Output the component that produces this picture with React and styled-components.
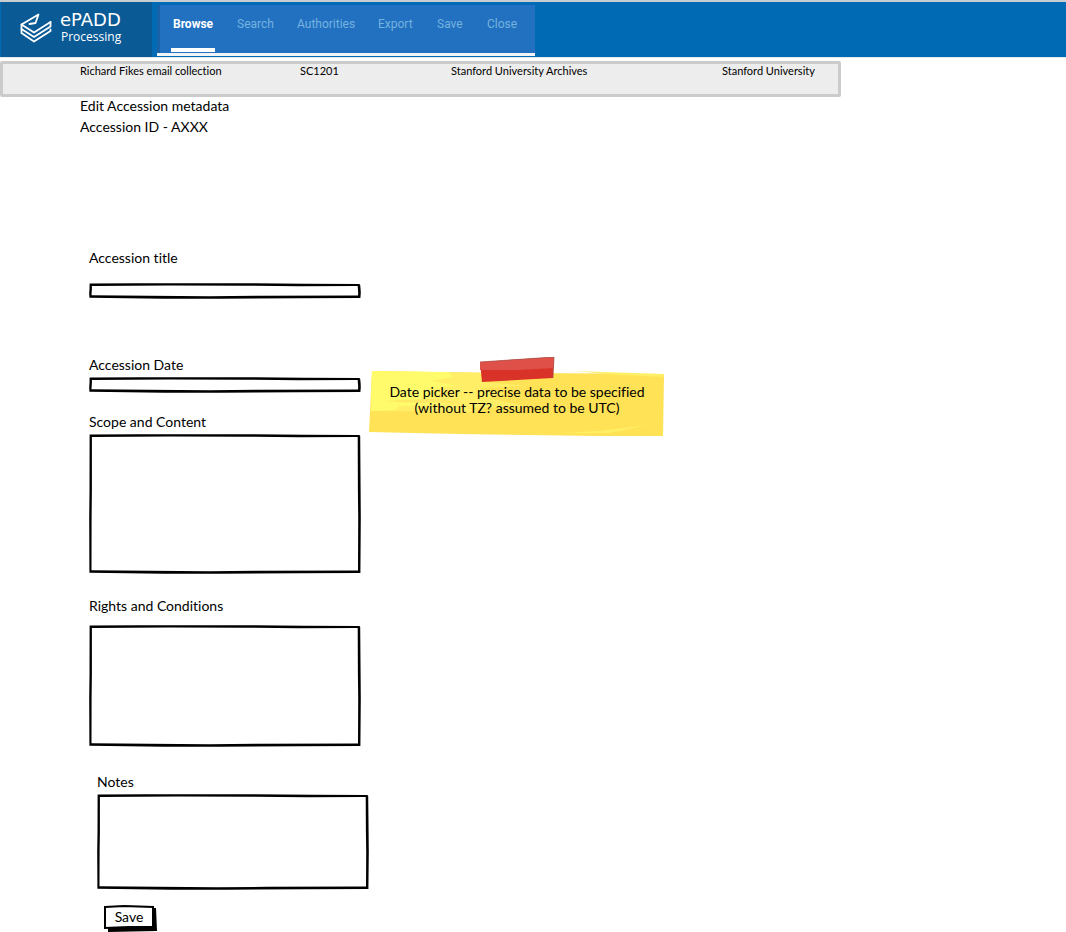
import React from "react";
import styled, { createGlobalStyle, css } from "styled-components";

const GlobalStyle = createGlobalStyle`
  *, *::before, *::after { box-sizing: border-box; }
  body {
    margin: 0;
    background: #ffffff;
    color: #000000;
    font-family: Lato, "Liberation Sans", sans-serif;
    font-size: 14px;
    line-height: 20px;
    font-variant-ligatures: none;
  }
`;

const Header = styled.header`
  display: flex;
  height: 58px;
  padding-left: 1px;
  border-top: 2px solid #c6cdd3;
  border-bottom: 1px solid #e3e8ec;
  background: #006ab5;
`;

const Brand = styled.a`
  display: flex;
  align-items: center;
  gap: 8px;
  width: 151px;
  padding: 0 0 4px 19px;
  background: #0a5a96;
  color: #ffffff;
  text-decoration: none;
`;

const BrandText = styled.span`
  display: flex;
  flex-direction: column;
`;

const BrandName = styled.span`
  font: 18px/18px "DejaVu Sans", sans-serif;
`;

const BrandMode = styled.span`
  padding-left: 1px;
  font: 12px/16px "Open Sans", sans-serif;
`;

const Nav = styled.nav`
  display: grid;
  grid-template-columns: 64px 60px 81px 59px 50px 48px;
  align-items: start;
  justify-items: start;
  width: 378px;
  height: 51px;
  margin: 3px 0 0 5px;
  padding-left: 16px;
  border-bottom: 3px solid #f0f4f8;
  background: #2271c1;
  box-shadow: inset 3px 0 #1a62a8;
`;

const NavLink = styled.a`
  position: relative;
  height: 47px;
  padding-top: 9px;
  color: #74b2df;
  font: 12px/20px Roboto, "Liberation Sans", sans-serif;
  text-decoration: none;
  ${({ $active }) =>
    $active &&
    css`
      color: #ffffff;
      font-weight: 700;
      &::after {
        content: "";
        position: absolute;
        inset: auto -2px 0;
        height: 4px;
        background: #ffffff;
      }
    `}
`;

const CollectionBar = styled.section`
  display: grid;
  grid-template-columns: 220fr 151fr 271fr 116fr;
  width: 100%;
  max-width: 841px;
  height: 36px;
  margin-top: 3px;
  padding-left: 77px;
  border: 3px solid #cbcbcb;
  border-radius: 2px;
  background: #ededed;
  font-size: 11px;
  line-height: 14px;
`;

const Page = styled.main`
  padding: 0 0 0 80px;
`;

const Heading = styled.h1`
  margin: 0;
  font-size: 14px;
  font-weight: 400;
  line-height: 18px;
`;

const AccessionId = styled.p`
  margin: 0;
  line-height: 24px;
`;

const Form = styled.form`
  display: flex;
  flex-direction: column;
  align-items: flex-start;
  padding: 109px 0 0 9px;
`;

const Field = styled.div`
  position: relative;
  display: flex;
  flex-direction: column;
  gap: ${({ $gap }) => $gap}px;
  width: 272px;
  margin: 0 0 ${({ $after }) => $after}px ${({ $indent }) => $indent || 0}px;
`;

const Sketch = styled.div`
  position: relative;
  display: flex;
  height: ${({ $height }) => $height}px;
`;

const Outline = styled.svg`
  position: absolute;
  inset: 0;
  width: 100%;
  height: 100%;
  pointer-events: none;
`;

const control = css`
  flex: 1;
  min-width: 0;
  margin: 0;
  padding: 2px 6px;
  border: 0;
  background: transparent;
  font: inherit;
  resize: none;
`;

const TextInput = styled.input`
  ${control}
`;

const TextArea = styled.textarea`
  ${control}
`;

const Note = styled.aside`
  position: absolute;
  top: 2px;
  left: 280px;
  width: 296px;
  height: 80px;
  padding-top: 27px;
  line-height: 16px;
  text-align: center;
`;

const NoteText = styled.p`
  position: relative;
  margin: 0;
`;

const SaveButton = styled.button`
  position: relative;
  width: 53px;
  height: 27px;
  margin-left: 15px;
  padding: 0 3px 4px 0;
  border: 0;
  background: transparent;
  color: inherit;
  font: inherit;
`;

const SaveText = styled.span`
  position: relative;
`;

function SketchOutline({ height: h }) {
  const m = Math.round(h * 0.4);
  const n = Math.round(h * 0.6);
  return (
    <Outline viewBox={`0 0 272 ${h}`} preserveAspectRatio="none" aria-hidden="true">
      <path
        fill="#000"
        fillRule="evenodd"
        d={`M0.6 0.6 L50 0.2 L150 0.2 L215 0.8 L270.5 1 L271.2 2 L271.6 ${m} L271.8 ${n} L271.4 ${h - 1} L210 ${h - 0.8} L130 ${h - 0.2} L75 ${h - 0.3} L20 ${h - 1} L0.4 ${h - 1.2} L0.2 ${n} L0.5 ${m} Z
        M2.9 3 L80 2.5 L155 2.7 L210 3.2 L268.7 3.1 L268.9 ${m} L269.2 ${n} L269 ${h - 3.4} L170 ${h - 3.2} L120 ${h - 2.7} L60 ${h - 3.2} L2.5 ${h - 3.7} L2.6 ${n} L2.9 ${m} Z`}
      />
    </Outline>
  );
}

function SketchField({ id, label, height, gap, after, indent, multiline, children }) {
  return (
    <Field $gap={gap} $after={after} $indent={indent}>
      <label htmlFor={id}>{label}</label>
      <Sketch $height={height}>
        {multiline ? <TextArea id={id} /> : <TextInput id={id} type="text" />}
        <SketchOutline height={height} />
      </Sketch>
      {children}
    </Field>
  );
}

function BrandMark() {
  return (
    <svg width="32" height="30" viewBox="0 0 32 30" fill="none" stroke="#fff" strokeWidth="1.8" strokeLinejoin="round" strokeLinecap="round" aria-hidden="true">
      <path d="M9.5 11 L15.5 10 L18.5 1.5 L1.5 11.5 L14 19.5 L30.5 9" />
      <path d="M1.5 11.5 V16 L14 24 L30.5 13.5 V9" />
      <path d="M1.5 16 V20 L14 28.5 L30.5 18 V16.5" />
    </svg>
  );
}

function StickyNote() {
  return (
    <Note>
      <Outline viewBox="0 0 296 80" aria-hidden="true">
        <path fill="#ffe255" d="M3 14 L60 15 L295 17 L294 79 L230 79 L90 77 L0 75 L1 55 Z" />
        <path fill="#ffee66" d="M3 14 L112 16 L114 25 L160 29 L110 31 L135 37 L120 41 L160 50 L100 51 L112 55 L2 54 Z" />
        <path fill="#fffb6b" d="M3 14 L80 15 L84 20 L62 24 L88 29 L55 33 L70 38 L50 43 L80 47 L30 49 L26 53 L2 54 Z" />
        <path fill="#ffe862" d="M14 44 L60 42 L96 45 L50 46 Z" />
        <path fill="#ffef67" d="M205 14 L295 17 L294 20 L250 18 Z M190 76 L230 74 L280 68 L240 76 Z" />
        <path fill="#d93228" d="M111 5 L185 0 L184 21 L113 25 Z" />
        <path fill="#df5148" d="M111 5 L185 0 L185 11 L150 13 L111 13 Z" />
        <path fill="none" stroke="#a5584f" strokeWidth=".7" d="M111 5 L185 0 L184 21" />
      </Outline>
      <NoteText>
        Date picker -- precise data to be specified
        <br />
        (without TZ? assumed to be UTC)
      </NoteText>
    </Note>
  );
}

const links = ["Browse", "Search", "Authorities", "Export", "Save", "Close"];

export default function App() {
  return (
    <>
      <GlobalStyle />
      <Header>
        <Brand href="#home">
          <BrandMark />
          <BrandText>
            <BrandName>ePADD</BrandName>
            <BrandMode>Processing</BrandMode>
          </BrandText>
        </Brand>
        <Nav>
          {links.map((name) => (
            <NavLink key={name} href={`#${name.toLowerCase()}`} $active={name === "Browse"}>
              {name}
            </NavLink>
          ))}
        </Nav>
      </Header>
      <CollectionBar>
        <span>Richard Fikes email collection</span>
        <span>SC1201</span>
        <span>Stanford University Archives</span>
        <span>Stanford University</span>
      </CollectionBar>
      <Page>
        <Heading>Edit Accession metadata</Heading>
        <AccessionId>Accession ID - AXXX</AccessionId>
        <Form onSubmit={(event) => event.preventDefault()}>
          <SketchField id="title" label="Accession title" height={16} gap={15} after={56} />
          <SketchField id="date" label="Accession Date" height={16} gap={2} after={19}>
            <StickyNote />
          </SketchField>
          <SketchField id="scope" label="Scope and Content" height={140} gap={2} after={22} multiline />
          <SketchField id="rights" label="Rights and Conditions" height={122} gap={9} after={25} multiline />
          <SketchField id="notes" label="Notes" height={96} gap={2} after={15} indent={8} multiline />
          <SaveButton type="submit">
            <Outline viewBox="0 0 53 27" aria-hidden="true">
              <path fill="#000" d="M4 4 L52 3 L53 26 L4 27 Z" />
              <path fill="#fff" stroke="#000" strokeWidth="2" d="M1 2 L20 1 L49 2 L49 22 L25 22 L1 23 Z" />
            </Outline>
            <SaveText>Save</SaveText>
          </SaveButton>
        </Form>
      </Page>
    </>
  );
}
